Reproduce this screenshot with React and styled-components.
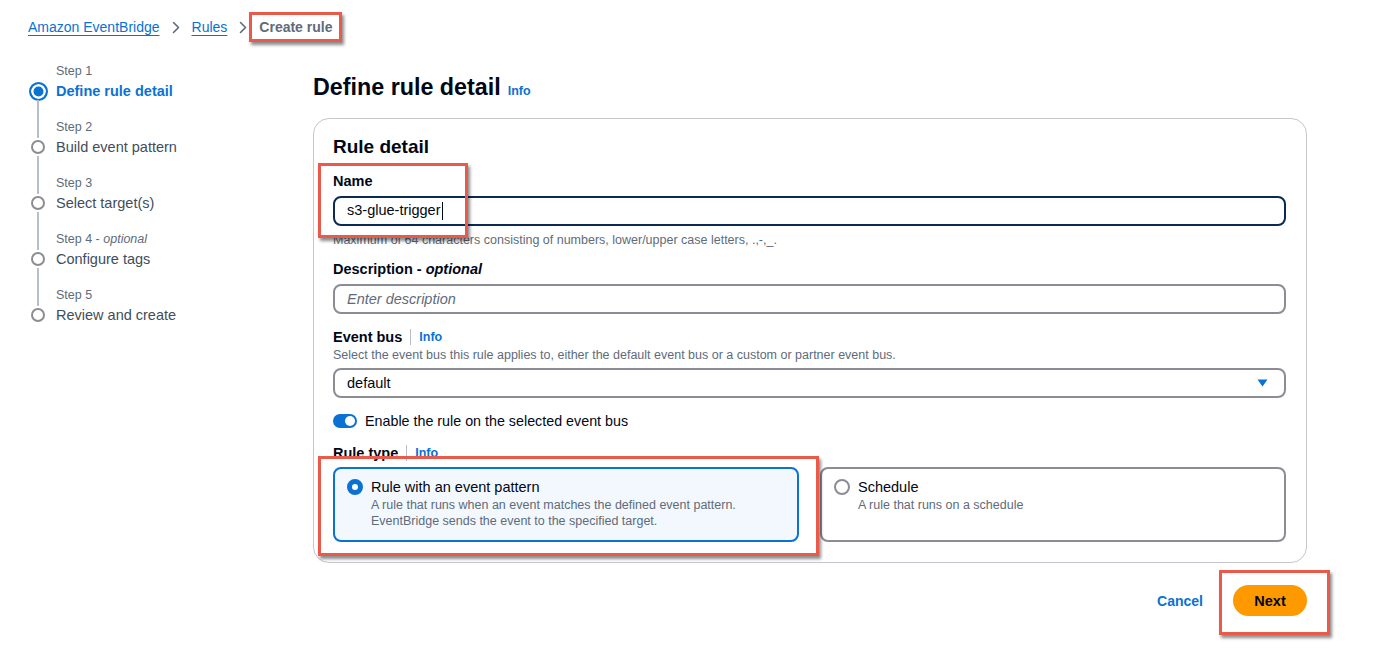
import React from 'react';
import styled, { createGlobalStyle } from 'styled-components';

const GlobalStyle = createGlobalStyle`
  html, body {
    margin: 0;
    padding: 0;
    background: #ffffff;
  }
  body {
    font-family: "Liberation Sans", Arial, sans-serif;
    color: #000716;
  }
  * {
    box-sizing: border-box;
  }
`;

const Page = styled.div`
  width: 1393px;
  height: 661px;
  padding: 17px 0 0 28px;
  overflow: hidden;
`;

const Breadcrumbs = styled.nav`
  display: flex;
  align-items: center;
  gap: 12px;
  height: 20px;
  font-size: 14px;
  line-height: 20px;
`;

const Crumb = styled.a`
  color: #0972d3;
  text-decoration: underline;
  text-underline-offset: 3px;
`;

const Current = styled.span`
  position: relative;
  color: #5f6b7a;
  font-weight: 700;
`;

const Callout = styled.span`
  position: absolute;
  left: ${p => p.$left}px;
  top: ${p => p.$top}px;
  width: ${p => p.$w}px;
  height: ${p => p.$h}px;
  border: 3px solid #ea5a4b;
  box-shadow: 2px 3px 3px rgba(0, 0, 0, 0.45);
  pointer-events: none;
  z-index: 5;
`;

const Body = styled.div`
  display: flex;
  margin-top: 24px;
`;

const Steps = styled.ol`
  list-style: none;
  margin: 0;
  padding: 0;
  width: 285px;
  flex-shrink: 0;
`;

const Step = styled.li`
  display: flex;
  gap: 8px;
  height: 56px;
`;

const Rail = styled.div`
  width: 20px;
  display: flex;
  flex-direction: column;
  align-items: center;
`;

const Segment = styled.span`
  width: 2px;
  background: ${p => (p.$hidden ? 'transparent' : '#b6bec9')};
  height: ${p => (p.$grow ? 'auto' : '21px')};
  flex: ${p => (p.$grow ? 1 : 'none')};
`;

const DotBox = styled.span`
  width: 18px;
  height: 18px;
  display: flex;
  align-items: center;
  justify-content: center;
`;

const Dot = styled.span`
  border-radius: 50%;
  width: ${p => (p.$active ? 19 : 14)}px;
  height: ${p => (p.$active ? 19 : 14)}px;
  flex-shrink: 0;
  border: 2px solid ${p => (p.$active ? '#0972d3' : '#8c8c94')};
  background: ${p => (p.$active ? '#0972d3' : '#ffffff')};
  box-shadow: ${p => (p.$active ? 'inset 0 0 0 2.5px #ffffff' : 'none')};
`;

const StepText = styled.div`
  padding-top: 2px;
`;

const StepLabel = styled.div`
  font-size: 12.5px;
  line-height: 16px;
  color: #5f6b7a;

  em {
    font-style: italic;
  }
`;

const StepTitle = styled.div`
  margin-top: 2px;
  font-size: 14.5px;
  line-height: 20px;
  color: ${p => (p.$active ? '#0972d3' : '#414d5c')};
  font-weight: ${p => (p.$active ? 700 : 400)};
`;

const Main = styled.main`
  width: 994px;
  display: flex;
  flex-direction: column;
`;

const HeadingRow = styled.div`
  margin-top: 12px;
  display: flex;
  align-items: baseline;
  gap: 7px;
`;

const H1 = styled.h1`
  margin: 0;
  font-size: 23.3px;
  line-height: 28px;
  font-weight: 700;
  color: #000716;
`;

const Info = styled.a`
  font-size: 12.5px;
  font-weight: 700;
  color: #0972d3;
`;

const Card = styled.section`
  margin-top: 17px;
  border: 1px solid #c6c6cd;
  border-radius: 16px;
  padding: 16px 20px 20px 19px;
`;

const CardTitle = styled.h2`
  margin: 0 0 12px;
  font-size: 19px;
  line-height: 24px;
  font-weight: 700;
`;

const Field = styled.div`
  position: relative;
  display: flex;
  flex-direction: column;
  margin-top: ${p => p.$gap || 0}px;
`;

const LabelRow = styled.div`
  display: flex;
  align-items: center;
  height: 20px;
`;

const Label = styled.label`
  font-size: 14.5px;
  line-height: 20px;
  font-weight: 700;

  em {
    font-style: italic;
  }
`;

const Divider = styled.span`
  width: 1px;
  height: 16px;
  background: #b6bec9;
  margin: 0 8px;
`;

const Help = styled.div`
  font-size: 12.5px;
  line-height: 16px;
  color: #5f6b7a;
  margin-top: ${p => p.$gap || 0}px;
`;

const InputBox = styled.div`
  margin-top: 5px;
  height: 30px;
  border: 2px solid ${p => (p.$focused ? '#0b2a52' : '#8c8c94')};
  border-radius: 8px;
  padding: 0 16px 0 12px;
  display: flex;
  align-items: center;
  justify-content: space-between;
  font-size: 14.5px;
  color: #000716;
`;

const Placeholder = styled.span`
  font-style: italic;
  color: #5f6b7a;
`;

const Caret = styled.span`
  display: inline-block;
  width: 1px;
  height: 18px;
  background: #000716;
  vertical-align: middle;
  margin-left: 1px;
`;

const ToggleRow = styled.div`
  margin-top: 13px;
  display: flex;
  align-items: center;
  gap: 8px;
  height: 20px;
  font-size: 14.3px;
`;

const Switch = styled.span`
  width: 24px;
  height: 14px;
  border-radius: 7px;
  background: #0972d3;
  display: flex;
  align-items: center;
  justify-content: flex-end;
  padding: 2px;

  &::after {
    content: '';
    width: 10px;
    height: 10px;
    border-radius: 50%;
    background: #ffffff;
  }
`;

const Tiles = styled.div`
  margin-top: 4px;
  display: grid;
  grid-template-columns: 1fr 1fr;
  gap: 21px;
`;

const Tile = styled.div`
  position: relative;
  height: 75px;
  border: 2px solid ${p => (p.$selected ? '#0972d3' : '#8c8c94')};
  background: ${p => (p.$selected ? '#f2f8fd' : '#ffffff')};
  border-radius: 8px;
  padding: 8px 12px;
  display: flex;
  gap: 8px;
`;

const Radio = styled.span`
  margin-top: 2px;
  width: 16px;
  height: 16px;
  flex-shrink: 0;
  border-radius: 50%;
  border: ${p => (p.$checked ? '5px solid #0972d3' : '2px solid #8c8c94')};
  background: #ffffff;
`;

const TileTitle = styled.div`
  font-size: 14.5px;
  line-height: 20px;
`;

const TileDesc = styled.div`
  font-size: 12.5px;
  line-height: 16px;
  color: #5f6b7a;
`;

const Footer = styled.div`
  margin-top: 22px;
  display: flex;
  justify-content: flex-end;
  align-items: center;
  gap: 30px;
`;

const Cancel = styled.a`
  font-size: 14px;
  font-weight: 700;
  color: #0972d3;
`;

const PrimaryWrap = styled.span`
  position: relative;
  display: inline-flex;
`;

const Primary = styled.button`
  width: 74px;
  height: 31px;
  border: none;
  border-radius: 16px;
  background: #ff9900;
  color: #000716;
  font-family: inherit;
  font-size: 14.5px;
  font-weight: 700;
`;

const Chevron = () => (
  <svg width="8" height="13" viewBox="0 0 8 13" fill="none">
    <path d="M1.5 1.5 L6.5 6.5 L1.5 11.5" stroke="#5f6b7a" strokeWidth="1.6" strokeLinecap="round" strokeLinejoin="round" />
  </svg>
);

const SelectCaret = () => (
  <svg width="11" height="8" viewBox="0 0 11 8">
    <path d="M0.5 0.5 H10.5 L5.5 7.5 Z" fill="#0972d3" />
  </svg>
);

const steps = [
  { label: 'Step 1', title: 'Define rule detail' },
  { label: 'Step 2', title: 'Build event pattern' },
  { label: 'Step 3', title: 'Select target(s)' },
  { label: 'Step 4', optional: true, title: 'Configure tags' },
  { label: 'Step 5', title: 'Review and create' },
];

function App() {
  return (
    <Page>
      <GlobalStyle />
      <Breadcrumbs>
        <Crumb>Amazon EventBridge</Crumb>
        <Chevron />
        <Crumb>Rules</Crumb>
        <Chevron />
        <Current>
          Create rule
          <Callout $left={-10} $top={-5} $w={93} $h={30} />
        </Current>
      </Breadcrumbs>

      <Body>
        <Steps>
          {steps.map((s, i) => (
            <Step key={s.label}>
              <Rail>
                <Segment $hidden={i === 0} />
                <DotBox>
                  <Dot $active={i === 0} />
                </DotBox>
                <Segment $grow $hidden={i === steps.length - 1} />
              </Rail>
              <StepText>
                <StepLabel>
                  {s.label}
                  {s.optional && <> - <em>optional</em></>}
                </StepLabel>
                <StepTitle $active={i === 0}>{s.title}</StepTitle>
              </StepText>
            </Step>
          ))}
        </Steps>

        <Main>
          <HeadingRow>
            <H1>Define rule detail</H1>
            <Info>Info</Info>
          </HeadingRow>

          <Card>
            <CardTitle>Rule detail</CardTitle>

            <Field>
              <Label>Name</Label>
              <InputBox $focused>
                <span>s3-glue-trigger<Caret /></span>
              </InputBox>
              <Callout $left={-15} $top={-8} $w={150} $h={75} />
            </Field>
            <Help $gap={6}>Maximum of 64 characters consisting of numbers, lower/upper case letters, .,-,_.</Help>

            <Field $gap={11}>
              <Label>Description - <em>optional</em></Label>
              <InputBox>
                <Placeholder>Enter description</Placeholder>
              </InputBox>
            </Field>

            <Field $gap={13}>
              <LabelRow>
                <Label>Event bus</Label>
                <Divider />
                <Info>Info</Info>
              </LabelRow>
              <Help>Select the event bus this rule applies to, either the default event bus or a custom or partner event bus.</Help>
              <InputBox>
                <span>default</span>
                <SelectCaret />
              </InputBox>
            </Field>

            <ToggleRow>
              <Switch />
              <span>Enable the rule on the selected event bus</span>
            </ToggleRow>

            <Field $gap={12}>
              <LabelRow>
                <Label>Rule type</Label>
                <Divider />
                <Info>Info</Info>
              </LabelRow>
              <Tiles>
                <Tile $selected>
                  <Radio $checked />
                  <div>
                    <TileTitle>Rule with an event pattern</TileTitle>
                    <TileDesc>A rule that runs when an event matches the defined event pattern.</TileDesc>
                    <TileDesc>EventBridge sends the event to the specified target.</TileDesc>
                  </div>
                  <Callout $left={-17} $top={-13} $w={501} $h={100} />
                </Tile>
                <Tile>
                  <Radio />
                  <div>
                    <TileTitle>Schedule</TileTitle>
                    <TileDesc>A rule that runs on a schedule</TileDesc>
                  </div>
                </Tile>
              </Tiles>
            </Field>
          </Card>

          <Footer>
            <Cancel>Cancel</Cancel>
            <PrimaryWrap>
              <Primary>Next</Primary>
              <Callout $left={-14} $top={-15} $w={111} $h={65} />
            </PrimaryWrap>
          </Footer>
        </Main>
      </Body>
    </Page>
  );
}

export default App;
